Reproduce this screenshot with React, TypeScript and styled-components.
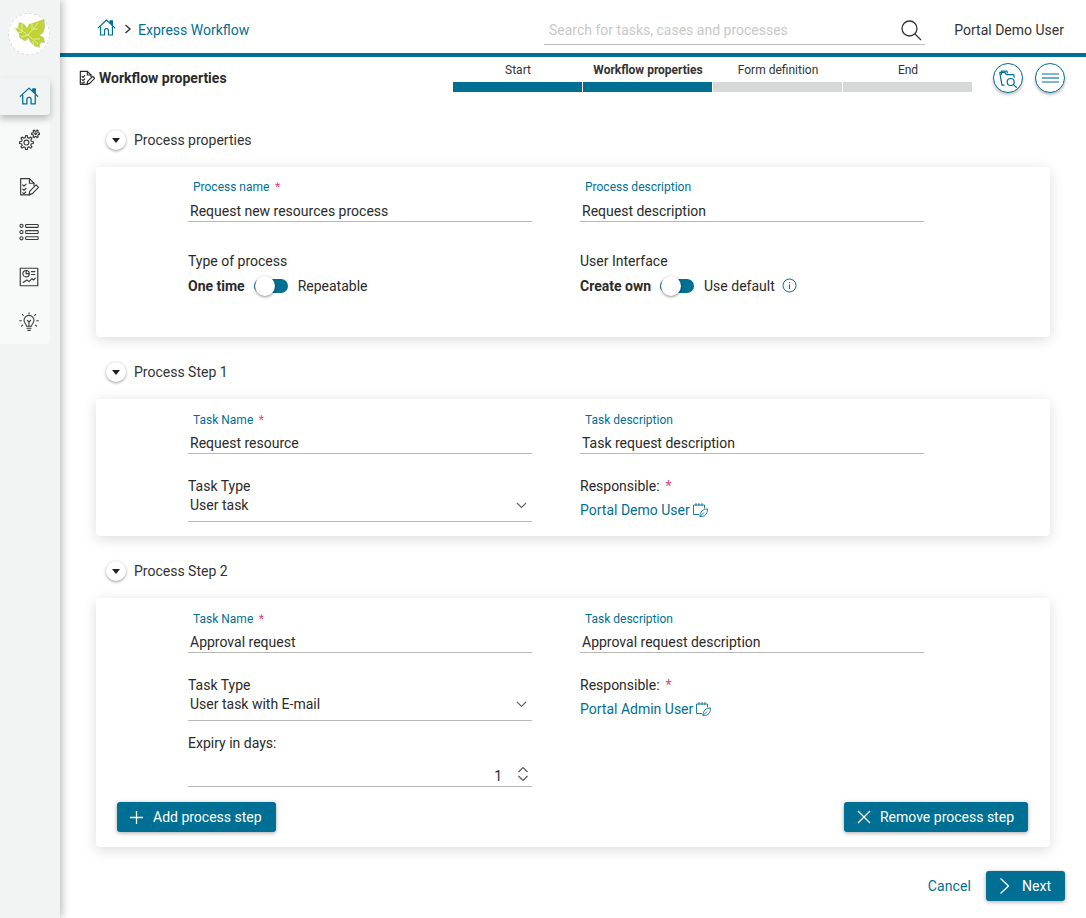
import React from "react";
import styled, { createGlobalStyle } from "styled-components";

const TEAL = "#006f94";
const Global = createGlobalStyle`
  html, body { margin: 0; padding: 0; background: #fff; }
  body { font-family: Roboto, "Liberation Sans", sans-serif; font-size: 14px; color: #2a2a2a; }
  * { box-sizing: border-box; }
`;
const Page = styled.div`display: flex; width: 1086px; height: 918px; overflow: hidden; background: #fff;`;
const Sidebar = styled.aside`
  width: 60px; flex: none; background: #f1f4f3; box-shadow: 2px 0 8px rgba(0,0,0,.28);
  display: flex; flex-direction: column; align-items: flex-start; position: relative; z-index: 2;
`;
const LogoWrap = styled.div`
  width: 42px; height: 42px; margin: 13px 0 23px 8px; border-radius: 50%; background: #fff;
  border: 1px dashed #dcdcdc; display: flex; align-items: center; justify-content: center;
`;
const Nav = styled.nav`width: 50px; height: 266px; background: #f8fafa; display: flex; flex-direction: column; border-radius: 0 4px 4px 0;`;
const NavItem = styled.div<{ $active?: boolean; $h?: number }>`
  height: ${p => p.$h ?? 45}px; display: flex; align-items: center; justify-content: center; padding-left: 8px;
  color: ${p => (p.$active ? TEAL : "#3a3a3a")};
  background: ${p => (p.$active ? "#f1f4f4" : "transparent")};
  border-radius: ${p => (p.$active ? "0 4px 4px 0" : "0")};
  box-shadow: ${p => (p.$active ? "0 4px 7px rgba(0,0,0,.25)" : "none")};
`;
const Main = styled.main`flex: 1; min-width: 0; display: flex; flex-direction: column;`;
const Header = styled.header`height: 57px; border-bottom: 4px solid ${TEAL}; display: flex; align-items: center; padding: 6px 22px 0 37px;`;
const Crumbs = styled.div`display: flex; align-items: center; color: ${TEAL}; flex: 1;`;
const CrumbHome = styled.span`display: flex; margin-top: -4px;`;
const CrumbSep = styled.span`display: flex; margin: -1px 6px 0 8px; color: #333;`;
const Search = styled.div`
  width: 381px; height: 30px; border-bottom: 1px solid #bdbdbd; display: flex; align-items: center;
  justify-content: space-between; padding: 0 3px 0 5px; color: #c9c9c9; margin-top: 1px;
`;
const UserName = styled.div`width: 139px; text-align: right; color: #333;`;
const SubBar = styled.div`height: 57px; display: flex; padding: 0 21px 0 19px;`;
const PageTitle = styled.h1`
  width: 374px; margin: 0; font-size: 14px; font-weight: 700; color: #2a2a2a; display: flex; gap: 4px; align-items: center; height: 42px;
`;
const TitleIcon = styled.span`display: flex; color: #2a2a2a;`;
const Stepper = styled.div`display: grid; grid-template-columns: repeat(4, 129px); gap: 1px; margin-top: 6px; height: 29px;`;
const Step = styled.div<{ $done?: boolean; $current?: boolean }>`
  font-size: 12px; text-align: center; color: #333; font-weight: ${p => (p.$current ? 700 : 400)};
  line-height: 15px; display: flex; flex-direction: column; justify-content: space-between; padding-left: 1px;
  &::after { content: ""; display: block; height: 10px; margin-left: -1px; background: ${p => (p.$done ? TEAL : "#d7d9d8")}; }
`;
const RoundGroup = styled.div`display: flex; gap: 12px; margin: 6px 0 0 21px; height: 30px;`;
const RoundBtn = styled.button`
  width: 30px; height: 30px; border-radius: 50%; border: 1px solid ${TEAL}; background: #fff; color: ${TEAL}; padding: 0;
  display: flex; align-items: center; justify-content: center; box-shadow: 0 2px 3px rgba(0,0,0,.25);
`;
const Content = styled.div`padding: 0 36px 0 36px; display: flex; flex-direction: column;`;
const SectionHead = styled.div`height: 28px; display: flex; align-items: center; gap: 8px; padding-left: 10px; margin-top: 12px; color: #333;`;
const Collapse = styled.span`
  width: 20px; height: 20px; border-radius: 50%; background: #fff; box-shadow: 0 1px 3px rgba(0,0,0,.4);
  display: flex; align-items: center; justify-content: center;
  &::before { content: ""; border: 4px solid transparent; border-top: 5px solid #222; border-bottom: 0; }
`;
const Card = styled.section<{ $h: number }>`
  height: ${p => p.$h}px; background: #fff; border-radius: 4px; margin-top: 13px; padding: 13px 0 0 92px; margin-bottom: 9px;
  box-shadow: 0 3px 14px rgba(0,0,0,.14);
`;
const Grid = styled.div`display: grid; grid-template-columns: 344px 344px; column-gap: 48px;`;
const Column = styled.div`display: flex; flex-direction: column;`;
const FloatLabel = styled.label<{ $low?: boolean }>`
  font-size: 12px; line-height: 15px; color: ${TEAL}; padding: ${p => (p.$low ? 1 : 0)}px 0 0 5px; display: block;
  margin-bottom: ${p => (p.$low ? 6 : 7)}px;
`;
const Star = styled.span<{ $gap?: number }>`color: #e8457a; margin-left: ${p => p.$gap ?? 5.5}px;`;
const Line = styled.div<{ $h: number; $pt?: number }>`
  height: ${p => p.$h}px; border-bottom: 1px solid #b8b8b8; padding: ${p => p.$pt ?? 0}px 2px 0; color: #2a2a2a;
  line-height: 18px; display: flex; justify-content: space-between; align-items: flex-start;
`;
const Plain = styled.div<{ $mt?: number }>`line-height: 18px; margin-top: ${p => p.$mt ?? 0}px; color: #2a2a2a;`;
const ToggleRow = styled.div`display: flex; align-items: center; height: 20px; margin-top: 6px; color: #2a2a2a;`;
const Bold = styled.b`font-weight: 700;`;
const Track = styled.span`
  width: 34px; height: 14px; background: ${TEAL}; border-radius: 7px; position: relative; margin: 0 10px 0 9px; flex: none;
  &::after {
    content: ""; position: absolute; left: 1px; top: -3px; width: 20px; height: 20px; border-radius: 50%;
    background: #fff; box-shadow: 0 1px 3px rgba(0,0,0,.45);
  }
`;
const InfoIcon = styled.span`display: inline-flex; margin: -2px 0 0 7px; color: ${TEAL};`;
const LinkRow = styled.div`color: ${TEAL}; margin-top: 6px; line-height: 18px; display: flex; align-items: center; gap: 2px;`;
const ChevronBox = styled.span`margin: 6px 3px 0 0; display: flex;`;
const ActionRow = styled.div`display: flex; justify-content: space-between; margin: 15px 22px 0 -71px;`;
const Btn = styled.button`
  height: 30px; border: 0; border-radius: 3px; background: ${TEAL}; color: #fff; font: 400 14px Roboto, sans-serif;
  display: flex; align-items: center; gap: 9px; padding: 0 14px 0 12px; box-shadow: 0 1px 4px rgba(0,0,0,.35);
`;
const RemoveBtn = styled(Btn)`gap: 8px; padding-right: 14px;`;
const Footer = styled.div`display: flex; justify-content: flex-end; align-items: center; gap: 15px; margin: 15px -15px 0 0;`;
const Cancel = styled.span`color: ${TEAL}; letter-spacing: .1px;`;
const NextBtn = styled(Btn)`padding: 0 14px 0 13px; gap: 12px;`;
const Spin = styled.span`display: flex; flex-direction: column; margin: -1px 1px 0 15px; color: #555; gap: 2px;`;
const Num = styled.span`margin-left: auto;`;

const I = ({ s = 20, w = 1.4, vb = 24, children }: { s?: number; w?: number; vb?: number; children: React.ReactNode }) => (
  <svg width={s} height={s} viewBox={`0 0 ${vb} ${vb}`} fill="none" stroke="currentColor" strokeWidth={w} strokeLinecap="round" strokeLinejoin="round">{children}</svg>
);
const gear = (cx: number, cy: number, r1: number, r2: number, n: number) => {
  const pts: string[] = [];
  const st = (Math.PI * 2) / n;
  for (let i = 0; i < n; i++) {
    const a = i * st;
    [[-0.3, r1], [-0.16, r2], [0.16, r2], [0.3, r1]].forEach(([o, r]) => {
      const t = a + (o as number) * st;
      pts.push(`${(cx + (r as number) * Math.cos(t)).toFixed(2)} ${(cy + (r as number) * Math.sin(t)).toFixed(2)}`);
    });
  }
  return "M" + pts.join("L") + "Z";
};
const HomeI = ({ s = 20 }: { s?: number }) => (
  <I s={s} w={1.5}>
    <path d="M1.500 12.500 12 2.500l10.500 10" />
    <path d="M16.500 6V3.500h3V9" fill="currentColor" />
    <path d="M4.500 11v10.500h5V16a2.500 2.500 0 0 1 5 0v5.500h5V11" />
  </I>
);
const Gears = () => (
  <I s={21} w={1.3}>
    <path d={gear(8.500, 15.500, 5.800, 8, 8)} /><circle cx="8.500" cy="15.500" r="2.800" />
    <path d={gear(19, 5.500, 3.200, 4.600, 6)} /><circle cx="19" cy="5.500" r="1" />
  </I>
);
const DocCheck = ({ s = 20, w = 1.4 }: { s?: number; w?: number }) => (
  <I s={s} w={w}>
    <path d="M12.500 21.500H2V2h10.500l5.500 5.500V10" /><path d="M12.500 2v5.500H18" />
    <path d="M4.500 9.500l1.500 1.500 2.500-2.500M4.500 14.500l1.500 1.500 2.500-2.500M4.500 19l1.500 1 2-2" />
    <path d="M12 21.500l1-4.500 7.500-7.500 3 3-7.500 7.500z" />
  </I>
);
const ListI = () => (
  <I s={20} w={1.3}>
    <circle cx="3" cy="4.500" r="1.900" /><rect x="8" y="3" width="15" height="3.400" rx=".8" />
    <circle cx="3" cy="12" r="1.900" /><rect x="8" y="10.300" width="15" height="3.400" rx=".8" />
    <circle cx="3" cy="19.500" r="1.900" /><rect x="8" y="17.600" width="15" height="3.400" rx=".8" />
  </I>
);
const Chart = () => (
  <I s={20} w={1.4}>
    <rect x="1.500" y="1.500" width="21" height="21" /><circle cx="8.500" cy="8" r="3.800" /><path d="M8.500 4.500V8h3.500" />
    <path d="M15 5.500h4M15 9h4" /><path d="M5 18.500l4.500-3 2.500 2 3.500-3.500 2 1.500 2-2" />
  </I>
);
const Bulb = () => (
  <I s={20} w={1.3}>
    <path d="M9 17c0-2.500-3-3.500-3-7a6 6 0 0 1 12 0c0 3.500-3 4.500-3 7z" />
    <path d="M9.500 19.500h5M10.500 22h3" /><path d="M10 10l2 2 2-2M12 12v5" />
    <path d="M12 .8v1.200M4 2.800l1.200 1.200M20 2.800l-1.200 1.200M.8 10.500h2M21.200 10.500h2M3 17l1.300-1.200M21 17l-1.300-1.200" />
  </I>
);
const FolderSearch = () => (
  <I s={21} w={1.4}>
    <path d="M7 19.500H4.500L2 5h6l1.500 2.500H18l.5 3" />
    <path d="M4 7.500V3.500h6l1 2" />
    <circle cx="14.500" cy="16" r="4" /><path d="M17.500 19l3.500 3" />
  </I>
);
const Chevron = () => (<svg width="11" height="7" viewBox="0 0 11 7" fill="none" stroke="#666" strokeWidth="1.2"><path d="M1 1l4.500 4.500L10 1" /></svg>);
const Up = () => (<svg width="12" height="7" viewBox="0 0 12 7" fill="none" stroke="#555" strokeWidth="1.2"><path d="M1.500 6L6 1.500 10.500 6" /></svg>);
const Down = () => (<svg width="12" height="7" viewBox="0 0 12 7" fill="none" stroke="#555" strokeWidth="1.2"><path d="M1.500 1L6 5.500 10.500 1" /></svg>);
const Picker = () => (
  <svg width="17" height="16" viewBox="0 0 17 16" fill="none" stroke={TEAL} strokeWidth=".9"><path d="M7 12.500H1.500V3h11v3.500" /><path d="M4 1v3M7 1v3M10 1v3" /><path d="M8 14.500c0-5 3-7.500 7.500-7.500 0 5-2.500 7.500-6 7.500zM8 14.500l4-4" /></svg>
);
const LEAF = "M3 14l5-1 1-6 5 2 3 4 2-4 7-2 8-3 .5 8-1.500 5-4 3 4.500 2 1 5-4.500.5-1 4.500-5-1.500-4-4-1.500-4-4 3-5-3-1-5-3-3.500z";
const Logo = () => (
  <svg width="38" height="38" viewBox="0 0 38 38">
    <path d={LEAF} fill="rgba(0,0,0,.18)" transform="translate(.6 1)" />
    <path d={LEAF} fill="#bfd334" />
    <path d="M8 13l10 7 10-12M18 20l10 9M18 20l-7 2M12 9v7M6 18l6-1M22 8v6M28 14h-5M30 24l-6 0M24 32l-1-6" stroke="#eef3c2" strokeWidth=".8" fill="none" />
  </svg>
);

const Field = ({ label, value, req, low }: { label: string; value: string; req?: boolean; low?: boolean }) => (
  <Column>
    <FloatLabel $low={low}>{label}{req && <Star>*</Star>}</FloatLabel>
    <Line $h={20}>{value}</Line>
  </Column>
);
const SelectField = ({ value }: { value: string }) => (
  <Column>
    <Plain $mt={23}>Task Type</Plain>
    <Line $h={27} $pt={1}>{value}<ChevronBox><Chevron /></ChevronBox></Line>
  </Column>
);
const Responsible = ({ name }: { name: string }) => (
  <Column>
    <Plain $mt={23}>Responsible:<Star $gap={6}>*</Star></Plain>
    <LinkRow>{name} <Picker /></LinkRow>
  </Column>
);
const X = () => (<svg width="16" height="16" viewBox="0 0 16 16" stroke="#fff" strokeWidth="1.300"><path d="M2 2l12 12M14 2L2 14" /></svg>);
const Plus = () => (<svg width="15" height="15" viewBox="0 0 15 15" stroke="#fff" strokeWidth="1.300"><path d="M7.500 1v13M1 7.500h13" /></svg>);
const Next = () => (<svg width="11" height="18" viewBox="0 0 11 18" fill="none" stroke="#fff" strokeWidth="1.300"><path d="M1.500 1.500L9.500 9l-8 7.500" /></svg>);

export default function App() {
  return (
    <Page>
      <Global />
      <Sidebar>
        <LogoWrap><Logo /></LogoWrap>
        <Nav>
          <NavItem $active $h={37}><HomeI /></NavItem>
          <NavItem $h={50}><Gears /></NavItem>
          <NavItem><DocCheck /></NavItem>
          <NavItem><ListI /></NavItem>
          <NavItem><Chart /></NavItem>
          <NavItem><Bulb /></NavItem>
        </Nav>
      </Sidebar>
      <Main>
        <Header>
          <Crumbs>
            <CrumbHome><HomeI s={19} /></CrumbHome>
            <CrumbSep><svg width="8" height="10" viewBox="0 0 8 10" fill="none" stroke="#333" strokeWidth="1.400"><path d="M1.500 1l4.500 4-4.500 4" /></svg></CrumbSep>
            Express Workflow
          </Crumbs>
          <Search>Search for tasks, cases and processes
            <svg width="22" height="22" viewBox="0 0 22 22" fill="none" stroke="#333" strokeWidth="1.300"><circle cx="9.500" cy="9.500" r="7.500" /><path d="M15 15l6 6" /></svg>
          </Search>
          <UserName>Portal Demo User</UserName>
        </Header>
        <SubBar>
          <PageTitle><TitleIcon><DocCheck s={16} w={1.8} /></TitleIcon>Workflow properties</PageTitle>
          <Stepper>
            <Step $done>Start</Step>
            <Step $done $current>Workflow properties</Step>
            <Step>Form definition</Step>
            <Step>End</Step>
          </Stepper>
          <RoundGroup>
            <RoundBtn><FolderSearch /></RoundBtn>
            <RoundBtn>
              <svg width="17" height="10" viewBox="0 0 17 10" stroke={TEAL}><path d="M0 1h17" /><path d="M0 5h17" strokeWidth="1.600" opacity=".7" /><path d="M0 9h17" /></svg>
            </RoundBtn>
          </RoundGroup>
        </SubBar>
        <Content>
          <SectionHead><Collapse />Process properties</SectionHead>
          <Card $h={170}>
            <Grid>
              <Field label="Process name" value="Request new resources process" req />
              <Field label="Process description" value="Request description" />
              <Column>
                <Plain $mt={30}>Type of process</Plain>
                <ToggleRow><Bold>One time</Bold><Track />Repeatable</ToggleRow>
              </Column>
              <Column>
                <Plain $mt={30}>User Interface</Plain>
                <ToggleRow><Bold>Create own</Bold><Track />Use default
                  <InfoIcon><svg width="15" height="15" viewBox="0 0 15 15" fill="none" stroke={TEAL}><circle cx="7.500" cy="7.500" r="6.500" /><path d="M7.500 6.500v4.500M7.500 4v1.200" /></svg></InfoIcon>
                </ToggleRow>
              </Column>
            </Grid>
          </Card>
          <SectionHead><Collapse />Process Step 1</SectionHead>
          <Card $h={137}>
            <Grid>
              <Field low label="Task Name" value="Request resource" req />
              <Field low label="Task description" value="Task request description" />
              <SelectField value="User task" />
              <Responsible name="Portal Demo User" />
            </Grid>
          </Card>
          <SectionHead><Collapse />Process Step 2</SectionHead>
          <Card $h={249}>
            <Grid>
              <Field low label="Task Name" value="Approval request" req />
              <Field low label="Task description" value="Approval request description" />
              <SelectField value="User task with E-mail" />
              <Responsible name="Portal Admin User" />
              <Column>
                <Plain $mt={13}>Expiry in days:</Plain>
                <Line $h={35} $pt={15}><Num>1</Num><Spin><Up /><Down /></Spin></Line>
              </Column>
            </Grid>
            <ActionRow>
              <Btn><Plus />Add process step</Btn>
              <RemoveBtn><X />Remove process step</RemoveBtn>
            </ActionRow>
          </Card>
          <Footer>
            <Cancel>Cancel</Cancel>
            <NextBtn><Next />Next</NextBtn>
          </Footer>
        </Content>
      </Main>
    </Page>
  );
}
